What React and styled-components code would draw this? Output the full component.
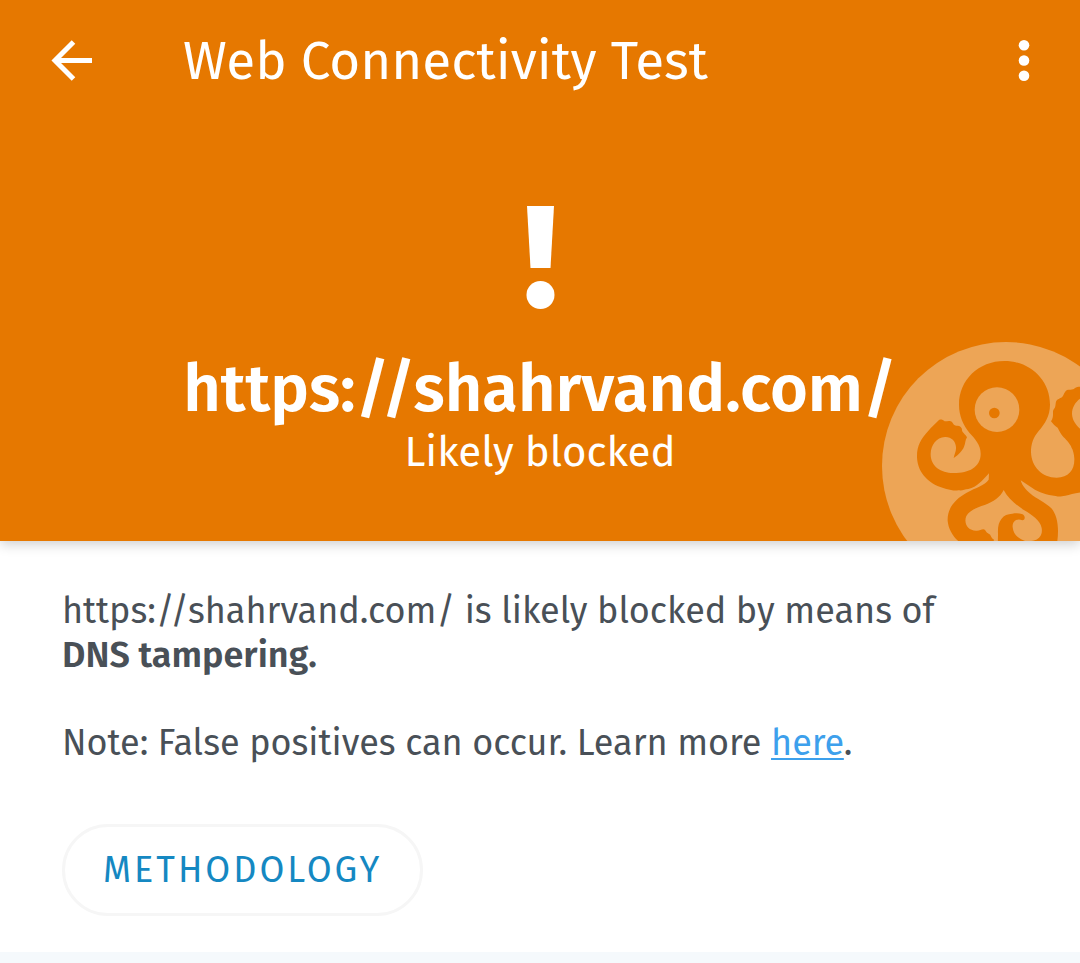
import React from "react";
import styled, { createGlobalStyle } from "styled-components";

const GlobalStyle = createGlobalStyle`
  *, *::before, *::after { box-sizing: border-box; }
  body {
    margin: 0;
    background: #f5f9fc;
    color: #495057;
    font-family: "Fira Sans", "Noto Sans", sans-serif;
  }
`;

const Header = styled.header`
  position: relative;
  z-index: 1;
  overflow: hidden;
  padding-bottom: 65px;
  background: #e67800;
  box-shadow: 0 3px 12px rgba(0, 0, 0, 0.2);
  color: #ffffff;
`;

const Toolbar = styled.div`
  position: relative;
  display: flex;
  align-items: center;
  height: 122px;
  padding: 0 16px 0 32px;
`;

const IconButton = styled.button`
  display: flex;
  align-items: center;
  justify-content: center;
  width: 80px;
  height: 80px;
  padding: 0;
  border: 0;
  background: none;
  color: inherit;
  cursor: pointer;
`;

const Title = styled.h1`
  flex: 1;
  margin: 0 0 0 71px;
  font-size: 53px;
  line-height: 64px;
  font-weight: 400;
`;

const Summary = styled.div`
  position: relative;
  display: flex;
  flex-direction: column;
  align-items: center;
  padding: 82px 32px 0;
  text-align: center;
`;

const Address = styled.h2`
  margin: 40px 0 0;
  font-size: 65px;
  line-height: 78px;
  font-weight: 600;
`;

const Verdict = styled.p`
  margin: 0;
  font-size: 42px;
  line-height: 48px;
`;

const Watermark = styled.svg`
  position: absolute;
  right: -50px;
  bottom: -49px;
  width: 248px;
  height: 248px;
`;

const Details = styled.main`
  padding: 48px 62px 36px;
  background: #ffffff;
`;

const Paragraph = styled.p`
  margin: 0 0 44px;
  font-size: 36px;
  line-height: 44px;
`;

const Strong = styled.strong`
  font-weight: 600;
`;

const Link = styled.a`
  color: #3da0ec;
  text-decoration-thickness: 2px;
  text-underline-offset: 3px;
`;

const PillButton = styled.button`
  display: block;
  height: 92px;
  margin-top: 59px;
  padding: 0 38px;
  border: 3px solid #f6f6f6;
  border-radius: 46px;
  background: #ffffff;
  color: #1588c2;
  font-family: inherit;
  font-size: 36px;
  line-height: 44px;
  letter-spacing: 3px;
  cursor: pointer;
`;

function Octopus() {
  return (
    <Watermark viewBox="36 36 744 744" aria-hidden="true">
      <circle cx="408" cy="408" r="372" fill="#eda556" />
      <path
        fill="#e67800"
        d="M403 93 C480 93 540 150 540 224 C540 258 524 282 506 303
          C490 322 483 342 483 366 C484 410 516 443 560 443
          C596 443 614 420 613 386 C612 374 610 362 604 352
          C603 346 590 330 581 322 C573 312 567 302 563 293
          C554 289 549 281 543 274 C550 264 549 255 549 246
          C548 238 556 236 556 228 C558 219 556 211 566 207
          C574 203 577 203 580 196 C584 184 590 178 597 179
          C604 180 611 179 614 175 C620 170 626 171 632 170 L680 170
          L680 205 L632 205 C617 215 606 232 606 252 C607 272 619 286 632 298
          L680 330 L680 487 L632 487 C612 490 600 494 586 497
          C574 499 568 501 557 498 C530 495 507 488 487 474 L452 451
          C456 468 472 485 489 497 C511 512 529 519 544 535
          C563 557 568 595 561 640 L555 690 L383 690
          L384 610 C382 574 397 552 427 551 C438 549 447 549 458 553
          C466 558 467 569 457 571 C440 563 426 575 428 592
          C430 611 441 623 460 631 C468 635 482 634 494 631
          C511 625 518 611 515 594 C510 570 487 556 463 541
          C435 523 414 504 401 480 C391 502 370 515 344 525
          C320 533 298 542 289 558 C280 580 294 602 318 602
          C328 603 333 598 340 598 C349 599 346 608 356 611
          C364 614 361 622 371 628 L378 690 L310 660
          C266 643 237 612 233 573 C231 534 257 506 290 488
          C318 472 344 467 356 449 L357 430
          C336 452 322 471 295 477 C283 478 278 483 265 481
          C252 483 242 480 229 477 C180 465 143 432 141 382
          C140 348 153 327 174 304 C184 291 196 282 207 270
          C213 267 218 269 224 274 C232 274 240 270 246 276
          C250 281 252 288 260 287 C270 286 277 293 276 301
          C276 308 289 315 291 322 C285 331 287 340 282 350
          C278 361 266 374 251 384 C253 372 259 365 258 351
          C257 333 243 320 225 321 C199 322 183 346 182 371
          C181 409 214 430 252 429 C296 429 332 412 332 371
          C332 344 315 326 298 308 C280 285 267 258 267 224
          C267 150 326 93 403 93 Z"
      />
      <circle cx="381" cy="239" r="67" fill="#eda556" />
      <circle cx="373" cy="249" r="16" fill="#e67800" />
    </Watermark>
  );
}

export default function App() {
  return (
    <>
      <GlobalStyle />
      <Header>
        <Octopus />
        <Toolbar>
          <IconButton type="button" aria-label="Back">
            <svg width="42" height="42" viewBox="0 0 42 42" fill="none" stroke="currentColor" strokeWidth="5">
              <path d="M41 20.500H5M22.500 2L4 20.500l18.500 18.500" />
            </svg>
          </IconButton>
          <Title>Web Connectivity Test</Title>
          <IconButton type="button" aria-label="More options">
            <svg width="12" height="42" viewBox="0 0 12 42" fill="currentColor">
              <circle cx="6" cy="5.300" r="5.300" />
              <circle cx="6" cy="20.500" r="5.300" />
              <circle cx="6" cy="35.700" r="5.300" />
            </svg>
          </IconButton>
        </Toolbar>
        <Summary>
          <svg width="30" height="106" viewBox="0 0 30 106" fill="#ffffff" role="img" aria-label="Warning">
            <path d="M2 2H29L25.500 64H5.500Z" />
            <circle cx="15.500" cy="91" r="14" />
          </svg>
          <Address>https://shahrvand.com/</Address>
          <Verdict>Likely blocked</Verdict>
        </Summary>
      </Header>
      <Details>
        <Paragraph>
          https://shahrvand.com/ is likely blocked by means of
          <br />
          <Strong>DNS tampering.</Strong>
        </Paragraph>
        <Paragraph>
          Note: False positives can occur. Learn more <Link href="#learn-more">here</Link>.
        </Paragraph>
        <PillButton type="button">METHODOLOGY</PillButton>
      </Details>
    </>
  );
}
